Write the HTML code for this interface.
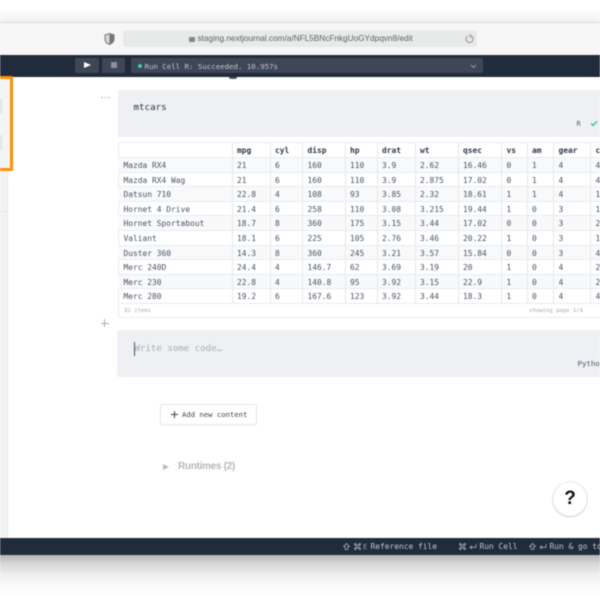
<!DOCTYPE html>
<html><head><meta charset="utf-8"><style>
html,body{margin:0;padding:0;width:600px;height:600px;overflow:hidden;background:#fff}
body{position:relative;font-family:"Liberation Sans",sans-serif}
#w{position:absolute;left:0;top:0;width:600px;height:600px;overflow:hidden;filter:blur(.4px)}
.a{position:absolute}
.m{font-family:"DejaVu Sans Mono","Liberation Mono",monospace;white-space:pre}
.r{position:absolute;left:118px;width:500px;height:14.6px;display:grid;grid-template-columns:113.5px 38px 32.5px 42.5px 32px 38px 43px 43.5px 25.5px 26.5px 37px 30px;font:7.9px/15px "DejaVu Sans Mono","Liberation Mono",monospace;color:#4a5260;border-bottom:1px solid #e9ebee;box-sizing:border-box}
.r b{font-weight:700;color:#2f3845}
.r span{padding-left:4.5px;border-left:1px solid #e6e8eb;white-space:pre}
.r span:first-child{border-left:0;padding-left:5.5px}
.s{background:#f8f9fa}
.k{top:541px;font-size:7.900px;line-height:11px;color:#c3c7cd}
.i{top:541px;font-size:7.300px;line-height:11px;color:#9aa1ab}
.g{position:absolute;top:543px;fill:none;stroke:#a4aab3;stroke-width:.8}
</style></head><body><div id="w">
<div class="a" style="left:0;top:0;width:600px;height:23px;background:linear-gradient(#fff 0,#fff 8px,#f1f1f1 22px)"></div>
<div class="a" style="left:0;top:22px;width:600px;height:33px;background:#f6f6f6;border-top:1px solid #dcdcdc;box-sizing:border-box"></div>
<svg class="a" style="left:104px;top:33px" width="11" height="12" viewBox="0 0 11 12"><path d="M5.500 .5 L10 2 V6 C10 9 7.500 10.700 5.500 11.500 C3.500 10.700 1 9 1 6 V2Z" fill="#d5d5d5" stroke="#777" stroke-width="1"/><path d="M5.500 .5 L10 2 V6 C10 9 7.500 10.700 5.500 11.500Z" fill="#777"/></svg>
<div class="a" style="left:123px;top:30px;width:354px;height:17px;background:#e8e9e9;border-radius:3px"></div>
<div class="a" style="left:189px;top:37px;width:6px;height:5px;background:#888;border-radius:1px"></div>
<div class="a" style="left:197.500px;top:33px;font-size:8.240px;line-height:12px;color:#5f6265;white-space:nowrap">staging.nextjournal.com/a/NFL5BNcFnkgUoGYdpqvn8/edit</div>
<svg class="a" style="left:465px;top:34px" width="9" height="10" viewBox="0 0 9 10"><path d="M6.800 2.300 A3.500 3.500 0 1 1 2.500 2.200" fill="none" stroke="#888" stroke-width=".9"/><path d="M4 .5 L6.500 2 L4.500 3.800" fill="none" stroke="#888" stroke-width=".8"/></svg>

<div class="a" style="left:0;top:55px;width:600px;height:22px;background:#202b3b"></div>
<div class="a" style="left:75px;top:58px;width:24px;height:15px;background:#3f4756;border-radius:2px"></div>
<div class="a" style="left:84px;top:62px;width:0;height:0;border-left:7px solid #fff;border-top:3.500px solid transparent;border-bottom:3.500px solid transparent"></div>
<div class="a" style="left:102px;top:58px;width:23px;height:15px;background:#3f4756;border-radius:2px"></div>
<div class="a" style="left:111px;top:62px;width:6px;height:6px;background:#8a909a"></div>
<div class="a" style="left:131px;top:58px;width:352px;height:15px;background:#3f4756;border-radius:2px"></div>
<div class="a" style="left:137.500px;top:63.500px;width:4.500px;height:4.500px;background:#2fd6a0;border-radius:50%"></div>
<div class="a m" style="left:144.500px;top:59.500px;font-size:7.400px;line-height:13px;color:#c3c7cd">Run Cell R: Succeeded. 10.957s</div>
<svg class="a" style="left:470px;top:63.500px" width="7" height="5" viewBox="0 0 7 5"><path d="M1 1 L3.500 3.500 L6 1" fill="none" stroke="#aeb2b9" stroke-width=".8"/></svg>
<div class="a" style="left:229px;top:77px;width:8px;height:1.500px;background:#4a5260;border-radius:0 0 4px 4px"></div>

<!-- sidebar -->
<div class="a" style="left:0;top:77px;width:8px;height:461px;background:#f2f3f5;border-right:1px solid #e8e9ec;box-sizing:border-box"></div>
<div class="a" style="left:0;top:211px;width:8px;height:1px;background:#e4e5e8"></div>
<div class="a" style="left:0;top:76px;width:13px;height:95px;background:#f3f4f6;border:3px solid #ff9000;border-left:0;border-radius:0 2px 2px 0;box-sizing:border-box"></div>
<div class="a" style="left:0;top:99px;width:1.500px;height:15px;background:#e2e3e6"></div>
<div class="a" style="left:0;top:135px;width:1.500px;height:15px;background:#e2e3e6"></div>

<div class="a" style="left:101px;top:97px;width:9px;height:1px;background:repeating-linear-gradient(90deg,#b5b8bc 0 2px,transparent 2px 3.500px)"></div>
<div class="a" style="left:118px;top:90px;width:482px;height:47px;background:#eff0f4;border-radius:2px 0 0 2px"></div>
<div class="a m" style="left:133.500px;top:102px;font-size:9.200px;line-height:12px;color:#2c3440">mtcars</div>
<div class="a m" style="left:576.500px;top:118.500px;font-size:7px;line-height:10px;color:#5b626e">R</div>
<svg class="a" style="left:590px;top:120px" width="8" height="7" viewBox="0 0 8 7"><path d="M1 3.500 L3 5.500 L7 1.200" fill="none" stroke="#2fc995" stroke-width="1.400"/></svg>

<!-- table -->
<div class="a" style="left:118px;top:142px;width:490px;height:176px;border:1px solid #eaecef;border-radius:2px;box-sizing:border-box"></div>
<div class="r" style="top:143px;height:15px;line-height:15px"><span></span><span><b>mpg</b></span><span><b>cyl</b></span><span><b>disp</b></span><span><b>hp</b></span><span><b>drat</b></span><span><b>wt</b></span><span><b>qsec</b></span><span><b>vs</b></span><span><b>am</b></span><span><b>gear</b></span><span><b>carb</b></span></div>
<div class="r s" style="top:158px"><span>Mazda RX4</span><span>21</span><span>6</span><span>160</span><span>110</span><span>3.9</span><span>2.62</span><span>16.46</span><span>0</span><span>1</span><span>4</span><span>4</span></div>
<div class="r" style="top:172.600px"><span>Mazda RX4 Wag</span><span>21</span><span>6</span><span>160</span><span>110</span><span>3.9</span><span>2.875</span><span>17.02</span><span>0</span><span>1</span><span>4</span><span>4</span></div>
<div class="r s" style="top:187.200px"><span>Datsun 710</span><span>22.8</span><span>4</span><span>108</span><span>93</span><span>3.85</span><span>2.32</span><span>18.61</span><span>1</span><span>1</span><span>4</span><span>1</span></div>
<div class="r" style="top:201.800px"><span>Hornet 4 Drive</span><span>21.4</span><span>6</span><span>258</span><span>110</span><span>3.08</span><span>3.215</span><span>19.44</span><span>1</span><span>0</span><span>3</span><span>1</span></div>
<div class="r s" style="top:216.400px"><span>Hornet Sportabout</span><span>18.7</span><span>8</span><span>360</span><span>175</span><span>3.15</span><span>3.44</span><span>17.02</span><span>0</span><span>0</span><span>3</span><span>2</span></div>
<div class="r" style="top:231px"><span>Valiant</span><span>18.1</span><span>6</span><span>225</span><span>105</span><span>2.76</span><span>3.46</span><span>20.22</span><span>1</span><span>0</span><span>3</span><span>1</span></div>
<div class="r s" style="top:245.600px"><span>Duster 360</span><span>14.3</span><span>8</span><span>360</span><span>245</span><span>3.21</span><span>3.57</span><span>15.84</span><span>0</span><span>0</span><span>3</span><span>4</span></div>
<div class="r" style="top:260.200px"><span>Merc 240D</span><span>24.4</span><span>4</span><span>146.7</span><span>62</span><span>3.69</span><span>3.19</span><span>20</span><span>1</span><span>0</span><span>4</span><span>2</span></div>
<div class="r s" style="top:274.800px"><span>Merc 230</span><span>22.8</span><span>4</span><span>140.8</span><span>95</span><span>3.92</span><span>3.15</span><span>22.9</span><span>1</span><span>0</span><span>4</span><span>2</span></div>
<div class="r" style="top:289.400px"><span>Merc 280</span><span>19.2</span><span>6</span><span>167.6</span><span>123</span><span>3.92</span><span>3.44</span><span>18.3</span><span>1</span><span>0</span><span>4</span><span>4</span></div>
<div class="a m" style="left:124px;top:307px;font-size:5.600px;line-height:9px;color:#a4a8ae">32 items</div>
<div class="a m" style="left:529px;top:307px;font-size:5.600px;line-height:9px;color:#a4a8ae">showing page 1/4</div>

<div class="a" style="left:100.500px;top:322.500px;width:8px;height:.7px;background:#a8abb0"></div>
<div class="a" style="left:104px;top:319px;width:.7px;height:8px;background:#a8abb0"></div>

<div class="a" style="left:117px;top:330px;width:483px;height:47px;background:#eff0f4;border-radius:2px 0 0 2px"></div>
<div class="a" style="left:133.500px;top:342px;width:1px;height:14px;background:#4a5260"></div>
<div class="a m" style="left:134.500px;top:343px;font-size:9.100px;line-height:13px;color:#a9adb4">Write some code…</div>
<div class="a m" style="left:577.500px;top:358.500px;font-size:7.400px;line-height:10px;color:#4f5763">Python</div>

<div class="a" style="left:160px;top:404px;width:97px;height:21px;background:#fff;border:1px solid #e6e7ea;border-radius:2px;box-sizing:border-box;box-shadow:0 .5px 1px rgba(0,0,0,.05)"></div>
<div class="a" style="left:171px;top:414.300px;width:7px;height:.7px;background:#3a4250"></div>
<div class="a" style="left:174.200px;top:411px;width:.7px;height:7px;background:#3a4250"></div>
<div class="a m" style="left:182px;top:409px;font-size:7.240px;line-height:11px;color:#3a4250">Add new content</div>

<div class="a" style="left:163px;top:463.500px;width:0;height:0;border-left:6.500px solid #b9bbbe;border-top:3.200px solid transparent;border-bottom:3.200px solid transparent"></div>
<div class="a" style="left:178px;top:460px;font-size:10px;line-height:13px;font-weight:700;letter-spacing:-.3px;color:#b5b7ba;white-space:nowrap">Runtimes (2)</div>

<div class="a" style="left:553px;top:482px;width:34px;height:34px;background:#fff;border-radius:50%;box-shadow:0 0 1.500px rgba(0,0,0,.3),0 1px 2px rgba(0,0,0,.15);text-align:center;font-size:19px;line-height:34px;font-weight:700;color:#111">?</div>

<!-- bottom -->
<div class="a" style="left:0;top:538px;width:600px;height:17px;background:#202b3b"></div>
<svg class="g" style="left:343px" width="7" height="7" viewBox="0 0 7 7"><path d="M3.500 .5 L6.500 3.500 H4.800 V6.500 H2.200 V3.500 H.5Z"/></svg>
<svg class="g" style="left:354px" width="7" height="7" viewBox="0 0 7 7"><path d="M2.200 2.200 H4.800 V4.800 H2.200Z M2.200 2.200 H1.300 A.9 .9 0 1 1 2.200 1.300 V5.700 A.9 .9 0 1 1 1.300 4.800 H5.700 A.9 .9 0 1 1 4.800 5.700 V1.300 A.9 .9 0 1 1 5.700 2.200 H2.200"/></svg>
<div class="a m i" style="left:363px">E</div>
<div class="a m k" style="left:370.500px">Reference file</div>
<svg class="g" style="left:459px" width="7" height="7" viewBox="0 0 7 7"><path d="M2.200 2.200 H4.800 V4.800 H2.200Z M2.200 2.200 H1.300 A.9 .9 0 1 1 2.200 1.300 V5.700 A.9 .9 0 1 1 1.300 4.800 H5.700 A.9 .9 0 1 1 4.800 5.700 V1.300 A.9 .9 0 1 1 5.700 2.200 H2.200"/></svg>
<svg class="g" style="left:469px" width="8" height="7" viewBox="0 0 8 7"><path d="M7 1 V4.300 H1 M3 2.500 L1 4.300 L3 6"/></svg>
<div class="a m k" style="left:479.500px">Run Cell</div>
<svg class="g" style="left:529px" width="7" height="7" viewBox="0 0 7 7"><path d="M3.500 .5 L6.500 3.500 H4.800 V6.500 H2.200 V3.500 H.5Z"/></svg>
<svg class="g" style="left:539px" width="8" height="7" viewBox="0 0 8 7"><path d="M7 1 V4.300 H1 M3 2.500 L1 4.300 L3 6"/></svg>
<div class="a m k" style="left:549.500px">Run &amp; go to next</div>
<div class="a" style="left:0;top:555px;width:600px;height:45px;background:linear-gradient(#b5b5b5 0,#d4d4d4 8px,#efefef 20px,#fbfbfb 32px,#fff 45px)"></div>
</div></body></html>
